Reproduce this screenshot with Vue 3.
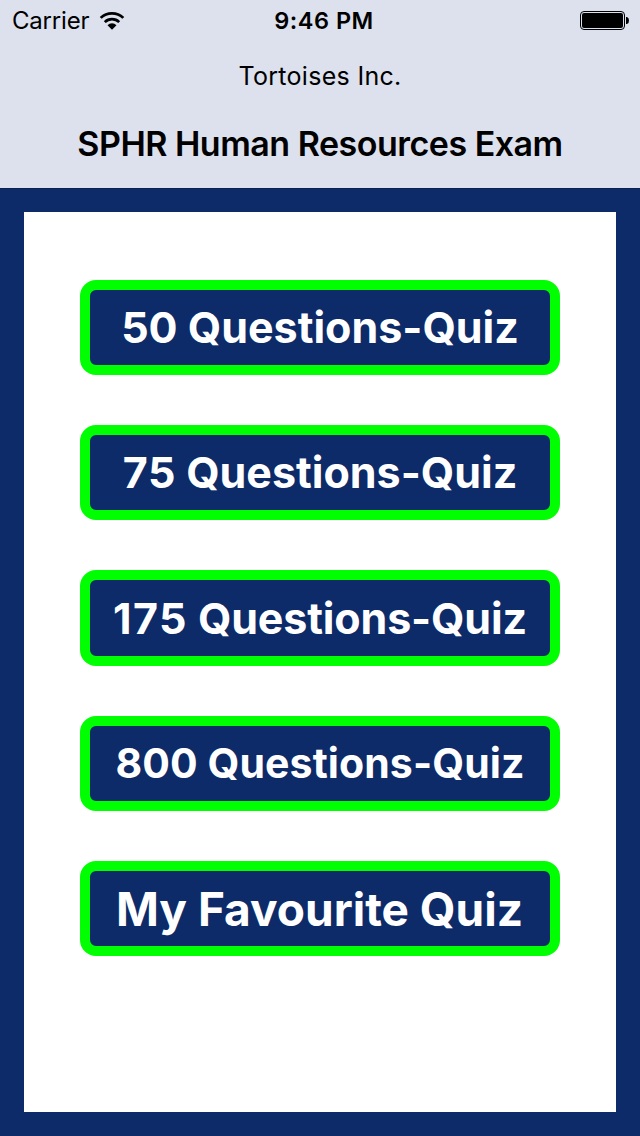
<template>
  <div class="screen">
    <header class="top">
      <div class="status-bar">
        <div class="carrier">
          <span class="carrier-name">Carrier</span>
          <svg class="wifi" width="26" height="20" viewBox="0 0 26 20">
            <path d="M13 18.8 L8.5 14.2 A6.4 6.4 0 0 1 17.5 14.2 Z" fill="#000" />
            <path d="M5.8 11.1 A10.3 10.3 0 0 1 20.2 11.1" fill="none" stroke="#000" stroke-width="2.7" />
            <path d="M1.7 6.9 A16.2 16.2 0 0 1 24.3 6.9" fill="none" stroke="#000" stroke-width="2.7" />
          </svg>
        </div>
        <span class="time">9:46 PM</span>
        <svg class="battery" width="49" height="20" viewBox="0 0 49 20">
          <rect x="0.5" y="0.5" width="44" height="18" rx="3.5" fill="none" stroke="#000" />
          <rect x="2" y="2" width="41" height="15" rx="2" fill="#000" />
          <path d="M46 6 H47 Q49 6.5 49 9.5 Q49 12.5 47 13 H46 Z" fill="#000" />
        </svg>
      </div>
      <div class="company">Tortoises Inc.</div>
      <h1 class="title">SPHR Human Resources Exam</h1>
    </header>
    <main class="panel">
      <button v-for="quiz in quizzes" :key="quiz.id" class="quiz-button" :class="quiz.id">
        <span><span class="first">{{ quiz.first }}</span> {{ quiz.rest }}</span>
      </button>
    </main>
  </div>
</template>

<script setup>
const quizzes = [
  { id: 'q50', first: '50', rest: 'Questions-Quiz' },
  { id: 'q75', first: '75', rest: 'Questions-Quiz' },
  { id: 'q175', first: '175', rest: 'Questions-Quiz' },
  { id: 'q800', first: '800', rest: 'Questions-Quiz' },
  { id: 'favourite', first: 'My', rest: 'Favourite Quiz' }
];
</script>

<style>
body {
  margin: 0;
}
</style>

<style scoped>
.screen {
  width: 640px;
  height: 1136px;
  display: flex;
  flex-direction: column;
  background-color: #0d2b68;
  font-family: Inter, "Liberation Sans", sans-serif;
  color: #000;
  overflow: hidden;
}

.top {
  height: 188px;
  flex: none;
  background-color: #dce1ed;
  border-bottom: 1px solid #0b2251;
  text-align: center;
}

.status-bar {
  height: 40px;
  display: grid;
  grid-template-columns: 1fr auto 1fr;
  align-items: center;
  padding: 0 11px 0 12px;
  box-sizing: border-box;
  font-size: 24px;
}

.carrier {
  display: flex;
  align-items: center;
  gap: 10px;
}

.carrier-name {
  letter-spacing: -0.2px;
}

.time {
  margin-left: 7px;
  font-weight: 600;
  font-size: 23.5px;
  letter-spacing: 0.5px;
}

.wifi,
.battery {
  margin-top: 2px;
}

.battery {
  justify-self: end;
}

.company {
  margin-top: 20px;
  font-size: 25px;
  line-height: 32px;
  letter-spacing: 0.3px;
}

.title {
  margin: 32px 0 0;
  font-size: 34px;
  line-height: 40px;
  font-weight: 600;
  letter-spacing: -0.5px;
  white-space: nowrap;
}

.panel {
  flex: none;
  width: 592px;
  height: 900px;
  margin: 23px auto 0;
  padding-top: 68px;
  box-sizing: border-box;
  display: flex;
  flex-direction: column;
  align-items: center;
  gap: 50px;
  background-color: #fff;
}

.quiz-button {
  flex: none;
  width: 480px;
  height: 95px;
  padding: 0 0 2px;
  display: flex;
  align-items: center;
  justify-content: center;
  border: 10px solid #00ff00;
  border-radius: 16px;
  background-color: #0d2b68;
  color: #fff;
  font-family: inherit;
  font-size: 43px;
  font-weight: 700;
  white-space: nowrap;
}

.q75 .first {
  letter-spacing: 0.6px;
}

.q175 {
  height: 96px;
  padding-bottom: 0;
  letter-spacing: -0.15px;
}

.q175 .first {
  letter-spacing: 1.4px;
}

.q800 {
  font-size: 41px;
  letter-spacing: 0.1px;
}

.favourite {
  padding: 0 1px 0 0;
  font-size: 46px;
}
</style>
